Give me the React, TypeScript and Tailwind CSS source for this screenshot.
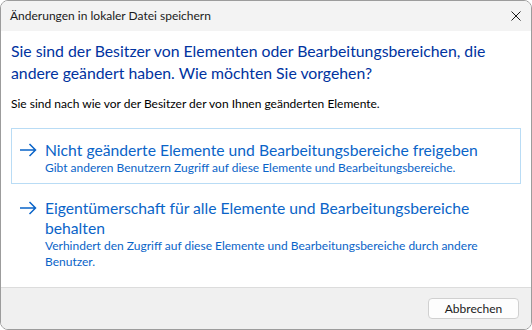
const Arrow = () => (
  <svg width="18" height="14" viewBox="0 0 18 14" fill="none" className="shrink-0">
    <path d="M1 7h15.5M10.5 1l6 6-6 6" stroke="#0a64c8" strokeWidth="1.5" />
  </svg>
);

const font = { fontFamily: 'Lato, "Noto Sans", sans-serif' };

export default function App() {
  return (
    <div className="w-[532px] h-[330px] bg-white" style={font}>
      <div className="w-full h-full flex flex-col border border-[#9c9c9c] rounded-lg overflow-hidden">
        {/* title bar */}
        <div className="h-[30px] bg-[#f3f3f3] flex items-center justify-between pl-[9px] pr-[10px] shrink-0">
          <span className="text-[12px] text-[#1b1b1b]">Änderungen in lokaler Datei speichern</span>
          <svg width="10" height="10" viewBox="0 0 10 10">
            <path d="M0.5 0.5l9 9M9.5 0.5l-9 9" stroke="#1b1b1b" strokeWidth="1" />
          </svg>
        </div>

        {/* content */}
        <div className="flex-1 bg-white px-[10px] pt-[9px]">
          <h1 className="text-[15.8px] leading-[22px] text-[#0033a0] whitespace-nowrap">
            Sie sind der Besitzer von Elementen oder Bearbeitungsbereichen, die
            <br />
            andere geändert haben. Wie möchten Sie vorgehen?
          </h1>
          <p className="mt-[12px] text-[12px] leading-[16px] text-black">
            Sie sind nach wie vor der Besitzer der von Ihnen geänderten Elemente.
          </p>

          <div className="mt-[16px] border border-[#b9dcf5] flex gap-[8px] pl-[7px] pt-[11px] pb-[7px]">
            <div className="h-[20px] flex items-center"><Arrow /></div>
            <div className="whitespace-nowrap">
              <div className="text-[15.7px] leading-[20px] text-[#0a64c8]">
                Nicht geänderte Elemente und Bearbeitungsbereiche freigeben
              </div>
              <div className="text-[12px] leading-[16px] text-[#0a64c8]">
                Gibt anderen Benutzern Zugriff auf diese Elemente und Bearbeitungsbereiche.
              </div>
            </div>
          </div>

          <div className="mt-[2px] border border-transparent flex gap-[8px] pl-[7px] pt-[11px]">
            <div className="h-[20px] flex items-center"><Arrow /></div>
            <div className="whitespace-nowrap">
              <div className="text-[15.7px] leading-[20px] text-[#0a64c8]">
                Eigentümerschaft für alle Elemente und Bearbeitungsbereiche
                <br />
                behalten
              </div>
              <div className="text-[12px] leading-[16px] text-[#0a64c8]">
                Verhindert den Zugriff auf diese Elemente und Bearbeitungsbereiche durch andere
                <br />
                Benutzer.
              </div>
            </div>
          </div>
        </div>

        {/* footer */}
        <div className="h-[42px] shrink-0 bg-[#f0f0f0] border-t border-[#dcdcdc] flex items-center justify-end pr-[12px]">
          <button className="w-[91px] h-[21px] bg-[#fdfdfd] border border-[#d0d0d0] rounded-[4px] text-[12px] text-[#1b1b1b] leading-none">
            Abbrechen
          </button>
        </div>
      </div>
    </div>
  );
}
